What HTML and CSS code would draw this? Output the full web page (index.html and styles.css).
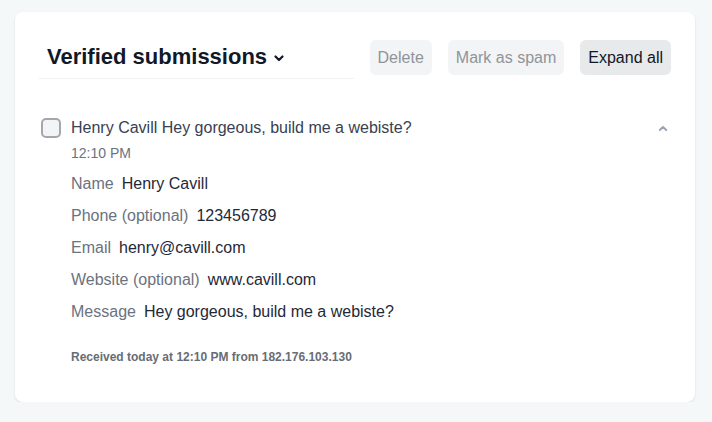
FILE: index.html
```html
<!DOCTYPE html>
<html lang="en">
<head>
<meta charset="utf-8">
<title>Verified submissions</title>
<link rel="stylesheet" href="styles.css">
</head>
<body>
<div class="card">
  <div class="header">
    <div class="title-box">
      <h1 class="title">Verified submissions</h1>
      <svg class="chev-down" width="10" height="7" viewBox="0 0 10 7"><path d="M1.5 1.5 L5 5 L8.5 1.5" fill="none" stroke="#111827" stroke-width="2.2" stroke-linecap="round" stroke-linejoin="round"/></svg>
    </div>
    <div class="actions">
      <button class="btn btn-muted">Delete</button>
      <button class="btn btn-muted">Mark as spam</button>
      <button class="btn btn-strong">Expand all</button>
    </div>
  </div>
  <div class="item">
    <div class="item-head">
      <span class="checkbox"></span>
      <div class="item-main">
        <div class="subject">Henry Cavill Hey gorgeous, build me a webiste?</div>
        <div class="time">12:10 PM</div>
      </div>
      <svg class="chev-up" width="10" height="7" viewBox="0 0 10 7"><path d="M1.8 5 L5 2 L8.2 5" fill="none" stroke="#9ca3af" stroke-width="2" stroke-linecap="round" stroke-linejoin="round"/></svg>
    </div>
    <div class="fields">
      <div class="field"><span class="label">Name</span><span class="value">Henry Cavill</span></div>
      <div class="field"><span class="label">Phone (optional)</span><span class="value">123456789</span></div>
      <div class="field"><span class="label">Email</span><span class="value">henry@cavill.com</span></div>
      <div class="field"><span class="label">Website (optional)</span><span class="value">www.cavill.com</span></div>
      <div class="field"><span class="label">Message</span><span class="value">Hey gorgeous, build me a webiste?</span></div>
    </div>
    <div class="meta">Received today at 12:10 PM from 182.176.103.130</div>
  </div>
</div>
</body>
</html>
```
FILE: styles.css
```css
html, body {
  margin: 0;
  padding: 0;
  background: #f5f8f9;
  font-family: "Liberation Sans", Arial, sans-serif;
}
body {
  padding: 12px 0 0 15px;
}
.card {
  box-sizing: border-box;
  width: 680px;
  height: 390px;
  background: #ffffff;
  border-radius: 8px;
  box-shadow: 0 1px 3px rgba(0, 0, 0, 0.08), 0 1px 2px rgba(0, 0, 0, 0.04);
  padding: 28px 24px 0 24px;
}
.header {
  display: flex;
  justify-content: space-between;
  align-items: flex-start;
}
.title-box {
  box-sizing: border-box;
  width: 315px;
  padding: 2px 8px 6px 8px;
  border-bottom: 1px solid #eff1f3;
  display: flex;
  align-items: center;
  gap: 7px;
}
.title {
  margin: 0;
  font-size: 22px;
  line-height: 30px;
  font-weight: 700;
  color: #111827;
}
.chev-down {
  margin-top: 3px;
}
.actions {
  display: flex;
  gap: 16px;
}
.btn {
  font-family: "Liberation Sans", Arial, sans-serif;
  font-size: 16px;
  height: 35px;
  padding: 0 8px;
  border: none;
  border-radius: 6px;
  line-height: 35px;
}
.btn-muted {
  background: #f3f4f5;
  color: #8f9499;
}
.btn-strong {
  background: #e8e9ea;
  color: #111827;
}
.item {
  margin-top: 37px;
}
.item-head {
  display: flex;
  align-items: flex-start;
}
.checkbox {
  box-sizing: border-box;
  width: 20px;
  height: 20px;
  margin: 2px 10px 0 2px;
  border: 2px solid #a3a7ad;
  border-radius: 5px;
  background: #f3f4f6;
  flex: none;
}
.item-main {
  flex: 1;
}
.subject {
  font-size: 16px;
  line-height: 24px;
  color: #374151;
}
.time {
  margin-top: 3px;
  font-size: 14px;
  line-height: 20px;
  color: #6b7280;
}
.chev-up {
  margin-top: 9px;
  margin-right: 3px;
}
.fields {
  margin: 9px 0 0 32px;
  display: flex;
  flex-direction: column;
  gap: 8px;
}
.field {
  font-size: 16px;
  line-height: 24px;
}
.label {
  color: #6b7280;
  margin-right: 8px;
}
.value {
  color: #1f2937;
}
.meta {
  margin: 25px 0 0 32px;
  font-size: 12px;
  line-height: 16px;
  font-weight: 700;
  color: #676d75;
}
```
